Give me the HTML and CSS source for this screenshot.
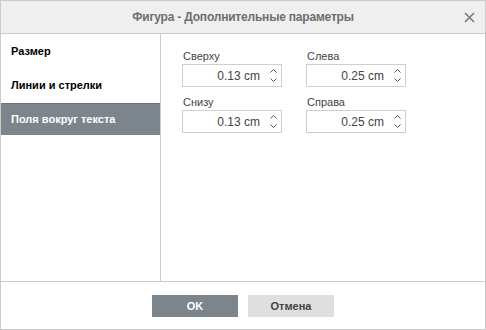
FILE: index.html
```html
<!DOCTYPE html>
<html lang="ru">
<head>
<meta charset="utf-8">
<title>Фигура - Дополнительные параметры</title>
<link rel="stylesheet" href="styles.css">
</head>
<body>
<div class="dialog">
  <div class="header">
    <span class="title">Фигура - Дополнительные параметры</span>
    <svg class="close" width="11" height="11" viewBox="0 0 11 11"><path d="M1 1L10 10M10 1L1 10" stroke="#7a7a7a" stroke-width="1.6" fill="none"/></svg>
  </div>
  <div class="body">
    <div class="sidebar">
      <div class="item">Размер</div>
      <div class="item">Линии и стрелки</div>
      <div class="item active">Поля вокруг текста</div>
    </div>
    <div class="content">
      <div class="field">
        <div class="label">Сверху</div>
        <div class="spin"><span class="val">0.13 cm</span><span class="arrows"><svg width="7" height="4" viewBox="0 0 7 4"><path d="M0.5 3.5L3.5 0.5L6.5 3.5" stroke="#555" fill="none"/></svg><svg width="7" height="4" viewBox="0 0 7 4"><path d="M0.5 0.5L3.5 3.5L6.5 0.5" stroke="#555" fill="none"/></svg></span></div>
      </div>
      <div class="field">
        <div class="label">Слева</div>
        <div class="spin"><span class="val">0.25 cm</span><span class="arrows"><svg width="7" height="4" viewBox="0 0 7 4"><path d="M0.5 3.5L3.5 0.5L6.5 3.5" stroke="#555" fill="none"/></svg><svg width="7" height="4" viewBox="0 0 7 4"><path d="M0.5 0.5L3.5 3.5L6.5 0.5" stroke="#555" fill="none"/></svg></span></div>
      </div>
      <div class="field">
        <div class="label">Снизу</div>
        <div class="spin"><span class="val">0.13 cm</span><span class="arrows"><svg width="7" height="4" viewBox="0 0 7 4"><path d="M0.5 3.5L3.5 0.5L6.5 3.5" stroke="#555" fill="none"/></svg><svg width="7" height="4" viewBox="0 0 7 4"><path d="M0.5 0.5L3.5 3.5L6.5 0.5" stroke="#555" fill="none"/></svg></span></div>
      </div>
      <div class="field">
        <div class="label">Справа</div>
        <div class="spin"><span class="val">0.25 cm</span><span class="arrows"><svg width="7" height="4" viewBox="0 0 7 4"><path d="M0.5 3.5L3.5 0.5L6.5 3.5" stroke="#555" fill="none"/></svg><svg width="7" height="4" viewBox="0 0 7 4"><path d="M0.5 0.5L3.5 3.5L6.5 0.5" stroke="#555" fill="none"/></svg></span></div>
      </div>
    </div>
  </div>
  <div class="footer">
    <button class="btn primary">OK</button>
    <button class="btn">Отмена</button>
  </div>
</div>
</body>
</html>
```
FILE: styles.css
```css
* { box-sizing: border-box; }
html, body { margin: 0; padding: 0; background: #fff; }
body { font-family: "Liberation Sans", Arial, sans-serif; }
.dialog {
  width: 486px;
  height: 330px;
  border: 1px solid #cbcbcb;
  display: flex;
  flex-direction: column;
  background: #fff;
}
.header {
  height: 33px;
  flex: none;
  background: #efefef;
  border-bottom: 1px solid #cbcbcb;
  display: flex;
  align-items: center;
  justify-content: center;
  position: relative;
}
.title {
  font-size: 12px;
  font-weight: bold;
  color: #6e6e6e;
  letter-spacing: -0.2px;
}
.close {
  position: absolute;
  right: 10px;
  top: 11px;
}
.body {
  flex: 1;
  display: flex;
  min-height: 0;
}
.sidebar {
  width: 160px;
  flex: none;
  border-right: 1px solid #cbcbcb;
  padding-top: 1px;
  display: flex;
  flex-direction: column;
  gap: 2px;
}
.item {
  height: 32px;
  line-height: 32px;
  padding-left: 10px;
  font-size: 11px;
  font-weight: bold;
  color: #000;
}
.item.active {
  background: #7d858c;
  color: #fff;
  box-shadow: inset 0 1px 0 #6d747b;
}
.content {
  padding: 16px 0 0 21px;
  display: grid;
  grid-template-columns: 100px 100px;
  column-gap: 24px;
  row-gap: 9px;
  align-content: start;
}
.label {
  font-size: 11px;
  color: #444;
  line-height: 13px;
  height: 13px;
  margin-bottom: 1px;
  padding-left: 1px;
}
.spin {
  height: 23px;
  border: 1px solid #cfcfcf;
  display: flex;
  align-items: center;
  justify-content: flex-end;
  padding-right: 4px;
}
.val {
  font-size: 12px;
  color: #444;
  margin-right: 10px;
}
.arrows {
  display: flex;
  flex-direction: column;
  gap: 5px;
}
.arrows svg { display: block; }
.footer {
  flex: none;
  height: 48px;
  border-top: 1px solid #cbcbcb;
  display: flex;
  justify-content: center;
  align-items: center;
  gap: 10px;
  padding-top: 1px;
}
.btn {
  width: 86px;
  height: 22px;
  border: none;
  background: #dfdfdf;
  color: #444;
  font-family: "Liberation Sans", Arial, sans-serif;
  font-size: 11px;
  font-weight: bold;
  padding: 0;
}
.btn.primary {
  background: #7d858c;
  color: #fff;
}
```
